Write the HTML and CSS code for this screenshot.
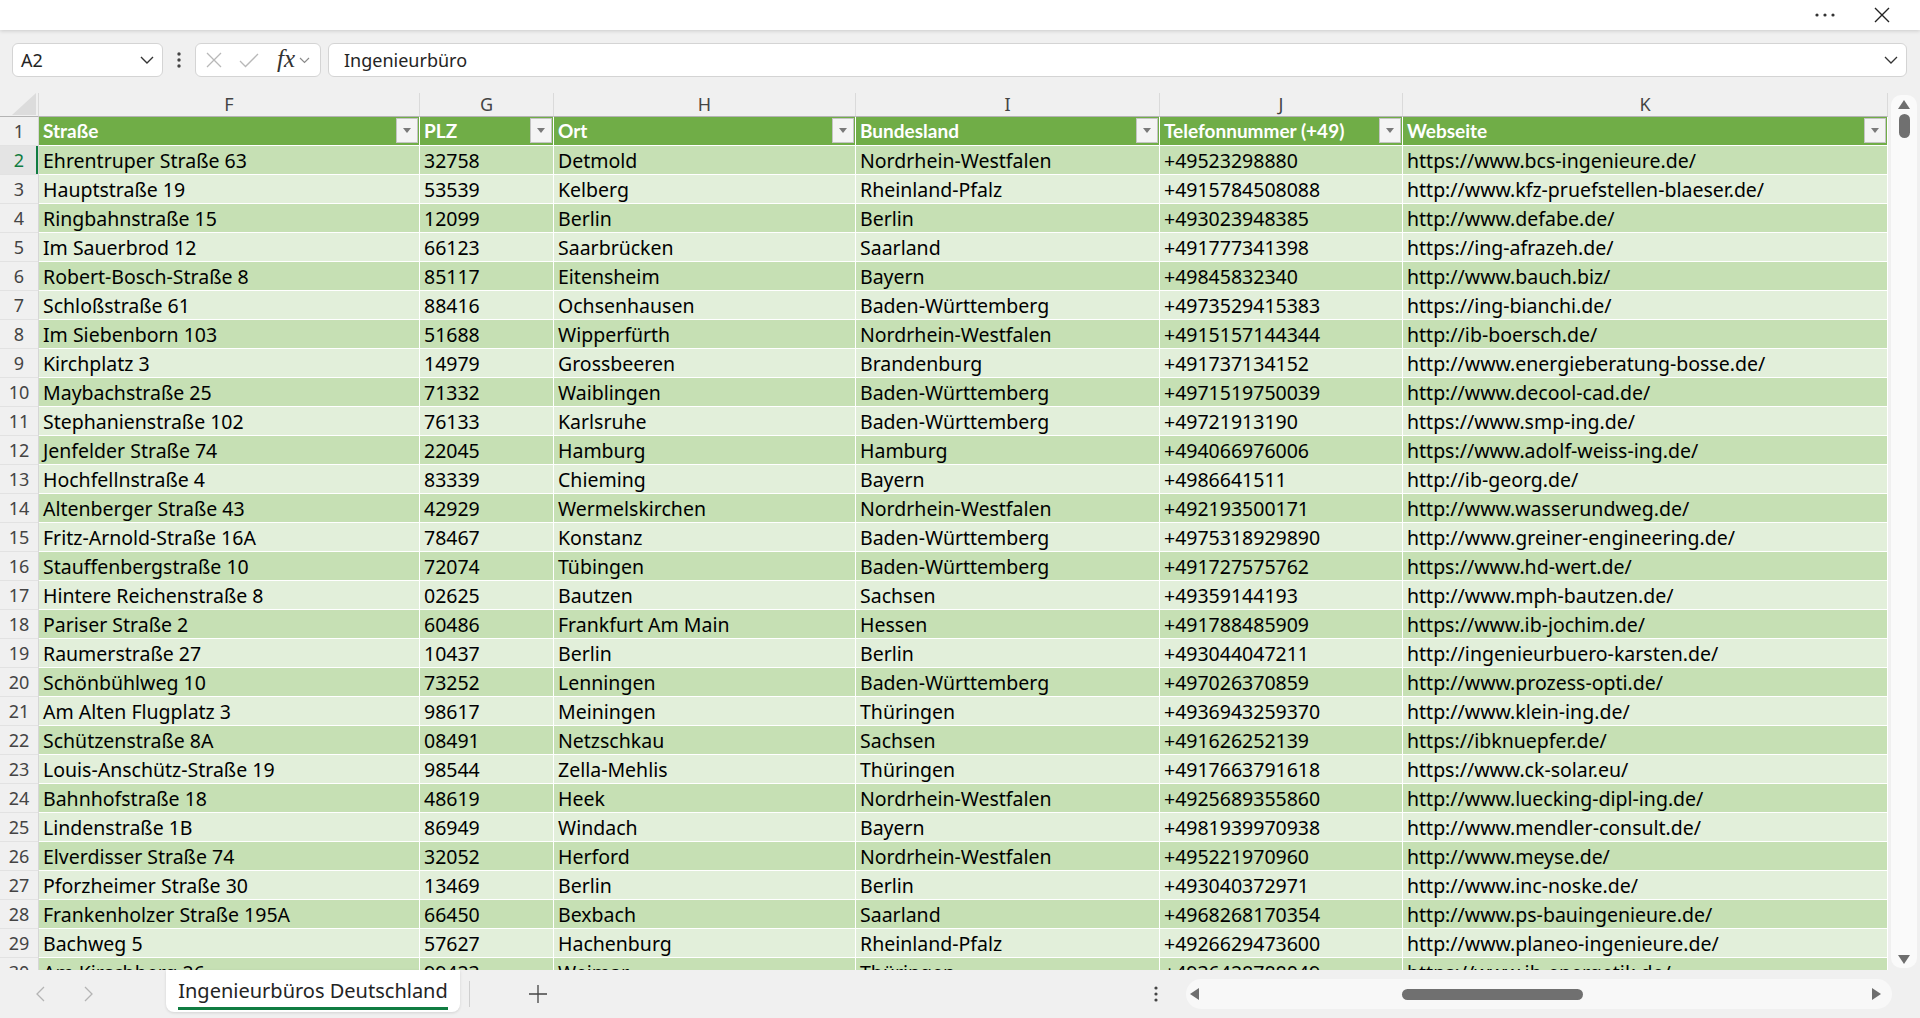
FILE: index.html
```html
<!DOCTYPE html>
<html lang="de">
<head>
    <meta charset="UTF-8">
    <meta name="viewport" content="width=device-width, initial-scale=1.0">
    <title>Ingenieurbüros Deutschland</title>
    <link rel="stylesheet" href="styles.css">
</head>
<body>
    <header class="titlebar">
        <button class="title-btn" aria-label="Mehr">
            <svg width="20" height="4" viewBox="0 0 20 4"><circle cx="2" cy="2" r="1.6" fill="#333"/><circle cx="10" cy="2" r="1.6" fill="#333"/><circle cx="18" cy="2" r="1.6" fill="#333"/></svg>
        </button>
        <button class="title-btn" aria-label="Schließen">
            <svg width="16" height="16" viewBox="0 0 16 16"><path d="M1 1L15 15M15 1L1 15" stroke="#222" stroke-width="1.4" fill="none"/></svg>
        </button>
    </header>

    <div class="formula-bar">
        <div class="name-box">
            <span>A2</span>
            <svg width="14" height="8" viewBox="0 0 14 8"><path d="M1 1L7 7L13 1" stroke="#333" stroke-width="1.4" fill="none"/></svg>
        </div>
        <div class="fb-dots">
            <svg width="4" height="16" viewBox="0 0 4 16"><circle cx="2" cy="2" r="1.7" fill="#444"/><circle cx="2" cy="8" r="1.7" fill="#444"/><circle cx="2" cy="14" r="1.7" fill="#444"/></svg>
        </div>
        <div class="fx-box">
            <svg class="fx-cancel" width="16" height="16" viewBox="0 0 16 16"><path d="M1 1L15 15M15 1L1 15" stroke="#b8b8b8" stroke-width="1.3" fill="none"/></svg>
            <svg class="fx-enter" width="20" height="15" viewBox="0 0 20 15"><path d="M1 8L6.5 13.5L19 1" stroke="#b8b8b8" stroke-width="1.3" fill="none"/></svg>
            <span class="fx">fx</span>
            <svg class="fx-more" width="11" height="7" viewBox="0 0 11 7"><path d="M1 1L5.5 5.5L10 1" stroke="#8a8a8a" stroke-width="1.2" fill="none"/></svg>
        </div>
        <div class="formula-input">
            <span>Ingenieurbüro</span>
            <svg width="14" height="8" viewBox="0 0 14 8"><path d="M1 1L7 7L13 1" stroke="#333" stroke-width="1.3" fill="none"/></svg>
        </div>
    </div>

    <main class="sheet">
        <div class="grid">
            <div class="row col-heads">
                <div class="corner"><svg width="24" height="22" viewBox="0 0 24 22"><polygon points="24,0 24,22 0,22" fill="#dcdcdc"/></svg></div>
                <div>F</div><div>G</div><div>H</div><div>I</div><div>J</div><div>K</div>
            </div>
            <div class="row head-row">
                <div class="rh">1</div>
                <div class="hc"><span>Straße</span><i class="filter"></i></div>
                <div class="hc"><span>PLZ</span><i class="filter"></i></div>
                <div class="hc"><span>Ort</span><i class="filter"></i></div>
                <div class="hc"><span>Bundesland</span><i class="filter"></i></div>
                <div class="hc"><span>Telefonnummer (+49)</span><i class="filter"></i></div>
                <div class="hc"><span>Webseite</span><i class="filter"></i></div>
            </div>
            <div class="row"><div class="rh selected">2</div><div>Ehrentruper Straße 63</div><div>32758</div><div>Detmold</div><div>Nordrhein-Westfalen</div><div>+49523298880</div><div>https://www.bcs-ingenieure.de/</div></div>
            <div class="row"><div class="rh">3</div><div>Hauptstraße 19</div><div>53539</div><div>Kelberg</div><div>Rheinland-Pfalz</div><div>+4915784508088</div><div>http://www.kfz-pruefstellen-blaeser.de/</div></div>
            <div class="row"><div class="rh">4</div><div>Ringbahnstraße 15</div><div>12099</div><div>Berlin</div><div>Berlin</div><div>+493023948385</div><div>http://www.defabe.de/</div></div>
            <div class="row"><div class="rh">5</div><div>Im Sauerbrod 12</div><div>66123</div><div>Saarbrücken</div><div>Saarland</div><div>+491777341398</div><div>https://ing-afrazeh.de/</div></div>
            <div class="row"><div class="rh">6</div><div>Robert-Bosch-Straße 8</div><div>85117</div><div>Eitensheim</div><div>Bayern</div><div>+49845832340</div><div>http://www.bauch.biz/</div></div>
            <div class="row"><div class="rh">7</div><div>Schloßstraße 61</div><div>88416</div><div>Ochsenhausen</div><div>Baden-Württemberg</div><div>+4973529415383</div><div>https://ing-bianchi.de/</div></div>
            <div class="row"><div class="rh">8</div><div>Im Siebenborn 103</div><div>51688</div><div>Wipperfürth</div><div>Nordrhein-Westfalen</div><div>+4915157144344</div><div>http://ib-boersch.de/</div></div>
            <div class="row"><div class="rh">9</div><div>Kirchplatz 3</div><div>14979</div><div>Grossbeeren</div><div>Brandenburg</div><div>+491737134152</div><div>http://www.energieberatung-bosse.de/</div></div>
            <div class="row"><div class="rh">10</div><div>Maybachstraße 25</div><div>71332</div><div>Waiblingen</div><div>Baden-Württemberg</div><div>+4971519750039</div><div>http://www.decool-cad.de/</div></div>
            <div class="row"><div class="rh">11</div><div>Stephanienstraße 102</div><div>76133</div><div>Karlsruhe</div><div>Baden-Württemberg</div><div>+49721913190</div><div>https://www.smp-ing.de/</div></div>
            <div class="row"><div class="rh">12</div><div>Jenfelder Straße 74</div><div>22045</div><div>Hamburg</div><div>Hamburg</div><div>+494066976006</div><div>https://www.adolf-weiss-ing.de/</div></div>
            <div class="row"><div class="rh">13</div><div>Hochfellnstraße 4</div><div>83339</div><div>Chieming</div><div>Bayern</div><div>+4986641511</div><div>http://ib-georg.de/</div></div>
            <div class="row"><div class="rh">14</div><div>Altenberger Straße 43</div><div>42929</div><div>Wermelskirchen</div><div>Nordrhein-Westfalen</div><div>+492193500171</div><div>http://www.wasserundweg.de/</div></div>
            <div class="row"><div class="rh">15</div><div>Fritz-Arnold-Straße 16A</div><div>78467</div><div>Konstanz</div><div>Baden-Württemberg</div><div>+4975318929890</div><div>http://www.greiner-engineering.de/</div></div>
            <div class="row"><div class="rh">16</div><div>Stauffenbergstraße 10</div><div>72074</div><div>Tübingen</div><div>Baden-Württemberg</div><div>+491727575762</div><div>https://www.hd-wert.de/</div></div>
            <div class="row"><div class="rh">17</div><div>Hintere Reichenstraße 8</div><div>02625</div><div>Bautzen</div><div>Sachsen</div><div>+49359144193</div><div>http://www.mph-bautzen.de/</div></div>
            <div class="row"><div class="rh">18</div><div>Pariser Straße 2</div><div>60486</div><div>Frankfurt Am Main</div><div>Hessen</div><div>+491788485909</div><div>https://www.ib-jochim.de/</div></div>
            <div class="row"><div class="rh">19</div><div>Raumerstraße 27</div><div>10437</div><div>Berlin</div><div>Berlin</div><div>+493044047211</div><div>http://ingenieurbuero-karsten.de/</div></div>
            <div class="row"><div class="rh">20</div><div>Schönbühlweg 10</div><div>73252</div><div>Lenningen</div><div>Baden-Württemberg</div><div>+497026370859</div><div>http://www.prozess-opti.de/</div></div>
            <div class="row"><div class="rh">21</div><div>Am Alten Flugplatz 3</div><div>98617</div><div>Meiningen</div><div>Thüringen</div><div>+4936943259370</div><div>http://www.klein-ing.de/</div></div>
            <div class="row"><div class="rh">22</div><div>Schützenstraße 8A</div><div>08491</div><div>Netzschkau</div><div>Sachsen</div><div>+491626252139</div><div>https://ibknuepfer.de/</div></div>
            <div class="row"><div class="rh">23</div><div>Louis-Anschütz-Straße 19</div><div>98544</div><div>Zella-Mehlis</div><div>Thüringen</div><div>+4917663791618</div><div>https://www.ck-solar.eu/</div></div>
            <div class="row"><div class="rh">24</div><div>Bahnhofstraße 18</div><div>48619</div><div>Heek</div><div>Nordrhein-Westfalen</div><div>+4925689355860</div><div>http://www.luecking-dipl-ing.de/</div></div>
            <div class="row"><div class="rh">25</div><div>Lindenstraße 1B</div><div>86949</div><div>Windach</div><div>Bayern</div><div>+4981939970938</div><div>http://www.mendler-consult.de/</div></div>
            <div class="row"><div class="rh">26</div><div>Elverdisser Straße 74</div><div>32052</div><div>Herford</div><div>Nordrhein-Westfalen</div><div>+495221970960</div><div>http://www.meyse.de/</div></div>
            <div class="row"><div class="rh">27</div><div>Pforzheimer Straße 30</div><div>13469</div><div>Berlin</div><div>Berlin</div><div>+493040372971</div><div>http://www.inc-noske.de/</div></div>
            <div class="row"><div class="rh">28</div><div>Frankenholzer Straße 195A</div><div>66450</div><div>Bexbach</div><div>Saarland</div><div>+4968268170354</div><div>http://www.ps-bauingenieure.de/</div></div>
            <div class="row"><div class="rh">29</div><div>Bachweg 5</div><div>57627</div><div>Hachenburg</div><div>Rheinland-Pfalz</div><div>+4926629473600</div><div>http://www.planeo-ingenieure.de/</div></div>
            <div class="row"><div class="rh">30</div><div>Am Kirschberg 26</div><div>99423</div><div>Weimar</div><div>Thüringen</div><div>+4936428788049</div><div>https://www.ib-energetik.de/</div></div>
        </div>

        <div class="vscroll">
            <svg width="12" height="9" viewBox="0 0 12 9"><polygon points="6,0 12,9 0,9" fill="#6e6e6e"/></svg>
            <div class="vthumb"></div>
            <div class="spacer"></div>
            <svg width="12" height="9" viewBox="0 0 12 9"><polygon points="0,0 12,0 6,9" fill="#6e6e6e"/></svg>
        </div>
    </main>

    <footer class="tabbar">
        <div class="tab-nav">
            <button><svg width="9" height="16" viewBox="0 0 9 16"><path d="M8 1L1 8L8 15" stroke="#b4b4b4" stroke-width="1.3" fill="none"/></svg></button>
            <button><svg width="9" height="16" viewBox="0 0 9 16"><path d="M1 1L8 8L1 15" stroke="#b4b4b4" stroke-width="1.3" fill="none"/></svg></button>
        </div>
        <div class="sheet-tab"><span>Ingenieurbüros Deutschland</span></div>
        <div class="tab-sep"></div>
        <button class="add-sheet"><svg width="18" height="18" viewBox="0 0 18 18"><path d="M9 0V18M0 9H18" stroke="#444" stroke-width="1.3" fill="none"/></svg></button>
        <div class="spacer"></div>
        <div class="tab-menu">
            <svg width="4" height="16" viewBox="0 0 4 16"><circle cx="2" cy="2" r="1.6" fill="#444"/><circle cx="2" cy="8" r="1.6" fill="#444"/><circle cx="2" cy="14" r="1.6" fill="#444"/></svg>
        </div>
        <div class="hscroll">
            <svg width="9" height="12" viewBox="0 0 9 12"><polygon points="0,6 9,0 9,12" fill="#6e6e6e"/></svg>
            <div class="hthumb"></div>
            <div class="spacer"></div>
            <svg width="9" height="12" viewBox="0 0 9 12"><polygon points="9,6 0,0 0,12" fill="#6e6e6e"/></svg>
        </div>
    </footer>
</body>
</html>
```

FILE: styles.css
```css
* {
    margin: 0;
    padding: 0;
    box-sizing: border-box;
}

body {
    width: 1920px;
    height: 1018px;
    overflow: hidden;
    background-color: #f0f0f0;
    font-family: "Noto Sans", Lato, sans-serif;
    color: #000;
}

button {
    border: none;
    background: none;
    display: flex;
    align-items: center;
    justify-content: center;
}

.spacer {
    flex: 1;
}

/* title bar */
.titlebar {
    height: 30px;
    background: #fff;
    display: flex;
    justify-content: flex-end;
    align-items: center;
    padding-right: 18px;
    box-shadow: 0 1px 4px rgba(0, 0, 0, 0.16);
    position: relative;
    z-index: 2;
}

.title-btn {
    width: 40px;
    height: 30px;
}

.title-btn + .title-btn {
    margin-left: 17px;
}

/* formula bar */
.formula-bar {
    height: 63px;
    display: flex;
    padding: 13px 13px 0 12px;
    font-size: 18px;
    color: #242424;
}

.name-box,
.fx-box,
.formula-input {
    height: 34px;
    background: #fff;
    border: 1px solid #d4d4d4;
    border-radius: 6px;
    display: flex;
    align-items: center;
}

.name-box {
    width: 151px;
    padding: 0 8px 0 8px;
    justify-content: space-between;
}

.fb-dots {
    width: 32px;
    height: 34px;
    display: flex;
    align-items: center;
    justify-content: center;
}

.fx-box {
    width: 126px;
    padding-left: 10px;
}

.fx-enter {
    margin-left: 17px;
}

.fx {
    margin-left: 18px;
    font-family: "Liberation Serif", serif;
    font-style: italic;
    font-size: 25px;
    color: #333;
    line-height: 1;
    margin-top: -3px;
}

.fx-more {
    margin-left: 4px;
}

.formula-input {
    flex: 1;
    margin-left: 7px;
    padding: 0 8px 0 15px;
    justify-content: space-between;
}

/* sheet */
.sheet {
    height: 877px;
    display: flex;
    overflow: hidden;
}

.grid {
    width: 1888px;
    overflow: hidden;
    font-size: 19.5px;
}

.row {
    display: grid;
    grid-template-columns: 39px 381px 134px 302px 304px 243px 485px;
    height: 29px;
}

.row > div {
    border-right: 1px solid #fff;
    border-bottom: 1px solid #fff;
    padding: 1px 4px 0;
    line-height: 27px;
    white-space: nowrap;
    overflow: hidden;
}

.row:nth-child(odd) > div {
    background: #c6e0b4;
}

.row:nth-child(even) > div {
    background: #e2efda;
}

.row > .rh {
    background: #f0f0f0 !important;
    border-bottom: 1px solid #e2e2e2;
    border-right: 1px solid #d6d6d6;
    padding: 0;
    line-height: 28px;
    text-align: center;
    font-size: 18px;
    color: #444;
}

.row > .rh.selected {
    background: #e4e4e4 !important;
    color: #107c41;
    box-shadow: inset -2px 0 0 #107c41;
}

.row.col-heads {
    height: 24px;
}

.row.col-heads > div {
    background: #f0f0f0;
    border-right: 1px solid #dadada;
    border-bottom: 1px solid #b4b4b4;
    padding: 0;
    line-height: 22px;
    overflow: visible;
    text-align: center;
    font-size: 18px;
    color: #444;
}

.row.col-heads > .corner {
    display: flex;
    align-items: flex-end;
    justify-content: flex-end;
    padding: 0 2px 1px 0;
}

.row.head-row > .hc {
    background: #70ad47;
    color: #fff;
    font-family: Lato, sans-serif;
    font-size: 19px;
    font-weight: bold;
    display: flex;
    padding: 0 1px 0 4px;
    line-height: 28px;
}

.hc span {
    flex: 1;
}

.filter {
    width: 22px;
    margin: 1px 0 2px;
    background: #f4f4f4;
    border: 1px solid #c4c4c4;
    display: flex;
    align-items: center;
    justify-content: center;
}

.filter::after {
    content: "";
    border-left: 4px solid transparent;
    border-right: 4px solid transparent;
    border-top: 5px solid #7a7a7a;
}

.vscroll {
    width: 26px;
    margin: 2px 3px 2px 3px;
    background: #fafafa;
    border-radius: 10px;
    display: flex;
    flex-direction: column;
    align-items: center;
    padding: 5px 0 4px;
}

.vthumb {
    width: 11px;
    height: 24px;
    margin-top: 5px;
    background: #707070;
    border-radius: 6px;
}

/* sheet tabs */
.tabbar {
    height: 48px;
    display: flex;
    align-items: center;
}

.tab-nav {
    display: flex;
    padding-left: 16px;
    height: 100%;
}

.tab-nav button {
    width: 48px;
}

.sheet-tab {
    margin-left: 54px;
    width: 294px;
    height: 42px;
    align-self: flex-start;
    background: #fff;
    border-radius: 0 0 8px 8px;
    box-shadow: 0 1px 3px rgba(0, 0, 0, 0.12);
    display: flex;
    justify-content: center;
    padding-top: 7px;
}

.sheet-tab span {
    font-size: 20px;
    color: #242424;
    line-height: 27px;
    height: 33px;
    border-bottom: 3px solid #107c41;
}

.tab-sep {
    width: 1px;
    height: 26px;
    margin-left: 9px;
    background: #cfcfcf;
}

.add-sheet {
    width: 40px;
    height: 40px;
    margin-left: 48px;
}

.tab-menu {
    width: 24px;
    display: flex;
    justify-content: center;
}

.hscroll {
    width: 706px;
    height: 30px;
    margin: 0 28px 0 18px;
    background: #f8f8f8;
    border-radius: 15px;
    display: flex;
    align-items: center;
    padding: 0 11px 0 4px;
}

.hthumb {
    width: 181px;
    height: 11px;
    margin-left: 203px;
    background: #707070;
    border-radius: 6px;
}
```
